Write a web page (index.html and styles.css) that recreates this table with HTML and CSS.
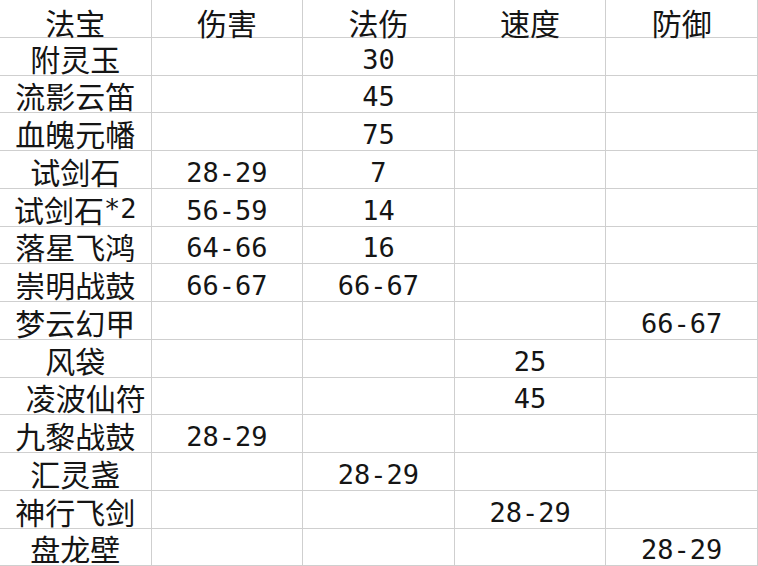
FILE: index.html
```html
<!DOCTYPE html>
<html lang="zh">
<head>
<meta charset="utf-8">
<title>法宝属性表</title>
<link rel="stylesheet" href="styles.css">
</head>
<body>
<div class="sheet">
  <div class="cell head">法宝</div><div class="cell head">伤害</div><div class="cell head">法伤</div><div class="cell head">速度</div><div class="cell head">防御</div>

  <div class="cell">附灵玉</div><div class="cell"></div><div class="cell num">30</div><div class="cell"></div><div class="cell"></div>
  <div class="cell">流影云笛</div><div class="cell"></div><div class="cell num">45</div><div class="cell"></div><div class="cell"></div>
  <div class="cell">血魄元幡</div><div class="cell"></div><div class="cell num">75</div><div class="cell"></div><div class="cell"></div>
  <div class="cell">试剑石</div><div class="cell num">28-29</div><div class="cell num">7</div><div class="cell"></div><div class="cell"></div>
  <div class="cell">试剑石<span class="num">*2</span></div><div class="cell num">56-59</div><div class="cell num">14</div><div class="cell"></div><div class="cell"></div>
  <div class="cell">落星飞鸿</div><div class="cell num">64-66</div><div class="cell num">16</div><div class="cell"></div><div class="cell"></div>
  <div class="cell">崇明战鼓</div><div class="cell num">66-67</div><div class="cell num">66-67</div><div class="cell"></div><div class="cell"></div>
  <div class="cell">梦云幻甲</div><div class="cell"></div><div class="cell"></div><div class="cell"></div><div class="cell num">66-67</div>
  <div class="cell">风袋</div><div class="cell"></div><div class="cell"></div><div class="cell num">25</div><div class="cell"></div>
  <div class="cell shift">凌波仙符</div><div class="cell"></div><div class="cell"></div><div class="cell num">45</div><div class="cell"></div>
  <div class="cell">九黎战鼓</div><div class="cell num">28-29</div><div class="cell"></div><div class="cell"></div><div class="cell"></div>
  <div class="cell">汇灵盏</div><div class="cell"></div><div class="cell num">28-29</div><div class="cell"></div><div class="cell"></div>
  <div class="cell">神行飞剑</div><div class="cell"></div><div class="cell"></div><div class="cell num">28-29</div><div class="cell"></div>
  <div class="cell">盘龙壁</div><div class="cell"></div><div class="cell"></div><div class="cell"></div><div class="cell num">28-29</div>
</div>
</body>
</html>
```

FILE: styles.css
```css
html, body {
  margin: 0;
  padding: 0;
  background: #ffffff;
}

.sheet {
  width: 760px;
  display: grid;
  grid-template-columns: repeat(5, 151.6px);
  grid-auto-rows: 37.75px;
  font-family: "Noto Sans CJK SC", "Noto Sans", sans-serif;
  font-size: 30px;
  color: #151515;
}

.cell {
  box-sizing: border-box;
  border-right: 1px solid #cfcfcf;
  border-bottom: 1px solid #cfcfcf;
  display: flex;
  align-items: flex-end;
  justify-content: center;
  line-height: 30px;
  padding-bottom: 2px;
  white-space: nowrap;
}

.cell.head {
  padding-bottom: 0;
}

.num {
  font-family: "DejaVu Sans Mono", "Liberation Mono", monospace;
  font-size: 27px;
}

.cell.num {
  padding-bottom: 0;
}

.shift {
  padding-left: 21px;
}
```
